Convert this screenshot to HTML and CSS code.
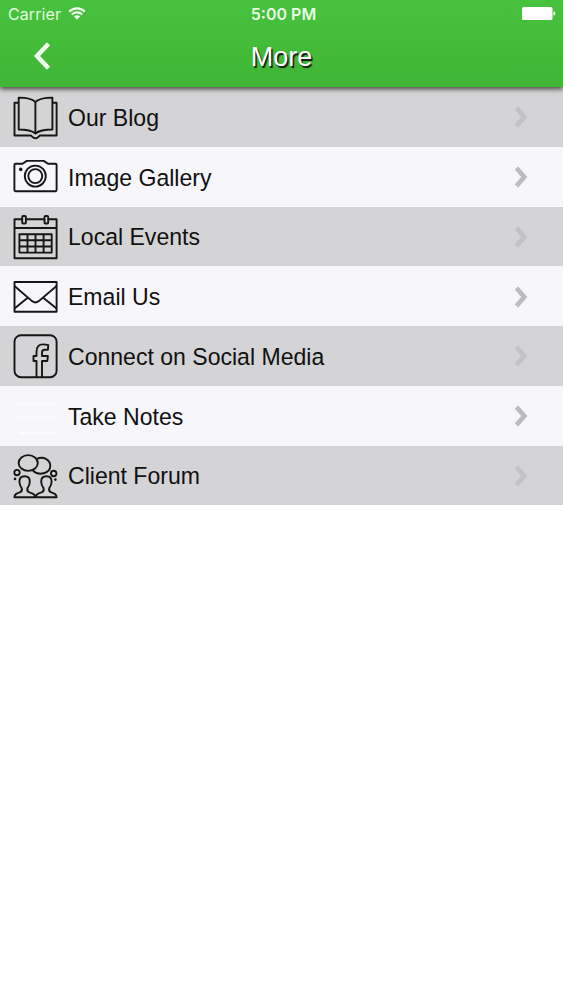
FILE: index.html
```html
<!DOCTYPE html>
<html lang="en">

<head>
    <meta charset="UTF-8">
    <meta name="viewport" content="width=device-width, initial-scale=1.0">
    <title>More</title>

    <link rel="stylesheet" href="styles.css">
</head>

<body>
    <header class="header">
        <div class="status">
            <div class="status__left">
                <span class="status__carrier">Carrier</span>
                <svg class="status__wifi" viewBox="0 0 18 13">
                    <path d="M1.200 4.600a11 11 0 0 1 15.600 0M3.900 7.500a7.200 7.200 0 0 1 10.200 0" />
                    <path class="status__wifi-dot" d="M9 12.600L5.900 9.500a4.400 4.400 0 0 1 6.200 0z" />
                </svg>
            </div>
            <span class="status__time">5:00 PM</span>
            <div class="status__right">
                <svg class="status__battery" viewBox="0 0 34 13">
                    <rect x="0" y="0" width="30.500" height="13" rx="1.500" />
                    <path d="M31.500 4.500q1.800 0 1.800 2t-1.800 2z" />
                </svg>
            </div>
        </div>
        <div class="nav">
            <a class="nav__back" href="#" aria-label="Back">
                <svg viewBox="0 0 18 28">
                    <path d="M15.500 1.800L4 14l11.500 12.200" />
                </svg>
            </a>
            <h1 class="nav__title">More</h1>
            <span></span>
        </div>
    </header>

    <ul class="menu">
        <li class="menu__item">
            <svg class="menu__icon" viewBox="0 0 46 46">
                <path d="M23.400 8C20 4.800 14 3.500 6.700 3.600V35.500C14 35.500 20 36.600 23.400 39.500C27 36.600 33 35.500 40.400 35.500V3.600C33 3.500 27 4.800 23.400 8V39" />
                <path d="M6.500 8.700H2.500V41.500H18.500C20 41.500 20.500 44.300 23.400 44.300S26.800 41.500 28.300 41.500H44.600V8.700H40.500" />
            </svg>
            <span class="menu__text">Our Blog</span>
            <svg class="menu__arrow" viewBox="0 0 16 24"><path d="M3.500 3l7.700 9-7.700 9" /></svg>
        </li>
        <li class="menu__item">
            <svg class="menu__icon" viewBox="0 0 46 46">
                <path d="M3.500 9.800H10.500L14.800 6.900H31.700L36 9.800H43.500Q44.600 9.800 44.600 11V36Q44.600 37.200 43.500 37.200H3.500Q2.400 37.200 2.400 36V11Q2.400 9.800 3.500 9.800z" />
                <circle cx="23.300" cy="22.100" r="10.500" />
                <circle cx="23.300" cy="22.100" r="7" />
                <circle class="fill" cx="8.700" cy="15.400" r="1.800" />
            </svg>
            <span class="menu__text">Image Gallery</span>
            <svg class="menu__arrow" viewBox="0 0 16 24"><path d="M3.500 3l7.700 9-7.700 9" /></svg>
        </li>
        <li class="menu__item">
            <svg class="menu__icon" viewBox="0 0 46 46">
                <path d="M10 5.200H2.500V44.200H44.600V5.200H36.500M14 5.200H32.200M2.500 14H44.600" />
                <rect x="10.200" y="2" width="3.700" height="7.500" rx="1" />
                <rect x="32.500" y="2" width="3.700" height="7.500" rx="1" />
                <path d="M7.400 20.200H39.700V38.600H7.400zM15.500 20.200V38.600M23.500 20.200V38.600M31.600 20.200V38.600M7.400 26.300H39.700M7.400 32.500H39.700" />
            </svg>
            <span class="menu__text">Local Events</span>
            <svg class="menu__arrow" viewBox="0 0 16 24"><path d="M3.500 3l7.700 9-7.700 9" /></svg>
        </li>
        <li class="menu__item">
            <svg class="menu__icon" viewBox="0 0 46 46">
                <path d="M2.500 8H44.600V37.800H2.500z" />
                <path d="M2.500 12L20 27.100Q23.400 29.700 26.800 27.100L44.600 12M2.500 34.500L15.700 23.800M44.600 34.500L31.200 23.800" />
            </svg>
            <span class="menu__text">Email Us</span>
            <svg class="menu__arrow" viewBox="0 0 16 24"><path d="M3.500 3l7.700 9-7.700 9" /></svg>
        </li>
        <li class="menu__item">
            <svg class="menu__icon" viewBox="0 0 46 46">
                <rect x="2.500" y="2.200" width="42.100" height="42" rx="6.500" />
                <path d="M24.500 44V28H21.500V23H24.500V19C24.500 13.500 27 11.400 31 11.400Q34 11.400 36.300 12.200L35.900 16.700H32.800Q30 16.700 30 19.500V23H35.900L35.300 28H30V44" />
            </svg>
            <span class="menu__text">Connect on Social Media</span>
            <svg class="menu__arrow" viewBox="0 0 16 24"><path d="M3.500 3l7.700 9-7.700 9" /></svg>
        </li>
        <li class="menu__item">
            <svg class="menu__icon menu__icon--light" viewBox="0 0 46 46">
                <path d="M7 10.500H44M7 24.500H44M7 40H44" />
            </svg>
            <span class="menu__text">Take Notes</span>
            <svg class="menu__arrow" viewBox="0 0 16 24"><path d="M3.500 3l7.700 9-7.700 9" /></svg>
        </li>
        <li class="menu__item">
            <svg class="menu__icon" viewBox="0 0 46 46">
                <ellipse cx="16.200" cy="10" rx="9.600" ry="7.900" />
                <path d="M24.800 5.900C31 2.800 38.300 6.500 38.300 12.800C38.300 20.500 26.500 23.500 20.800 17.300" />
                <circle cx="5" cy="19.600" r="2.700" />
                <circle cx="41.700" cy="20.500" r="2.700" />
                <circle class="fill" cx="3" cy="25.900" r="1.300" />
                <circle class="fill" cx="43.400" cy="26.600" r="1.300" />
                <path d="M2.400 44.300H44.600C44.600 40.800 42 40.200 38.800 39.200Q36.300 38 37.400 34.800Q39.600 32 39.600 28.500Q39.600 23.300 34.400 23.300T29.200 28.500Q29.200 32 31.400 34.800Q32.500 38 30 39.200C27 40.200 23.500 40.800 23.500 44.300C23.500 40.800 20 40.200 17 39.200Q14.500 38 15.600 34.800Q17.800 32 17.800 28.500Q17.800 23.300 12.600 23.300T7.400 28.500Q7.400 32 9.600 34.800Q10.700 38 8.200 39.200C5 40.200 2.400 40.800 2.400 44.300z" />
            </svg>
            <span class="menu__text">Client Forum</span>
            <svg class="menu__arrow" viewBox="0 0 16 24"><path d="M3.500 3l7.700 9-7.700 9" /></svg>
        </li>
    </ul>
</body>

</html>
```
FILE: styles.css
```css
body {
    margin: 0;
    background-color: #fff;
    font-family: "Liberation Sans", Helvetica, Arial, sans-serif;
    color: #111;
}

svg {
    display: block;
    fill: none;
}

.header {
    position: relative;
    height: 87px;
    background: linear-gradient(#47c23e, #3fb635);
    box-shadow: 0 2px 5px rgba(0, 0, 0, .7);
    color: #fff;
}

.status {
    display: grid;
    grid-template-columns: 1fr auto 1fr;
    align-items: center;
    height: 28px;
    padding: 0 7px 0 8px;
    font-family: Inter, sans-serif;
    font-size: 16px;
}

.status__left {
    display: flex;
    align-items: center;
    gap: 7px;
}

.status__carrier {
    letter-spacing: .1px;
    color: #e2fadf;
}

.status__wifi {
    width: 18px;
    height: 13px;
    margin-top: -1px;
    stroke: #f2fff0;
    stroke-width: 2.2;
}

.status__wifi-dot {
    fill: #f2fff0;
    stroke: none;
}

.status__time {
    padding-left: 3px;
    font-weight: 600;
    color: #e6fce3;
}

.status__right {
    display: flex;
    justify-content: flex-end;
}

.status__battery {
    width: 34px;
    height: 13px;
    margin-top: -1px;
    fill: #fff;
}

.nav {
    display: grid;
    grid-template-columns: 1fr auto 1fr;
    align-items: center;
    height: 56px;
}

.nav__back svg {
    width: 18px;
    height: 28px;
    margin-left: 33px;
    stroke: #f4fff2;
    stroke-width: 4.5;
}

.nav__title {
    margin: 2px 0 0;
    font-size: 27px;
    font-weight: normal;
    text-shadow: 1.5px 1.5px 1px #111;
}

.menu {
    margin: 0;
    padding: 0;
    list-style: none;
}

.menu__item {
    display: flex;
    align-items: center;
    box-sizing: border-box;
    height: 59.75px;
    padding: 1px 34px 0 12px;
    background-color: #f7f6fa;
}

.menu__item:nth-child(odd) {
    background-color: #d4d3d5;
}

.menu__icon {
    width: 46px;
    height: 46px;
    stroke: #161616;
    stroke-width: 1.9;
    stroke-linejoin: round;
}

.menu__icon .fill {
    fill: #161616;
    stroke: none;
}

.menu__icon--light {
    stroke: #fcfcfd;
}

.menu__text {
    flex: 1;
    margin: 2px 0 0 10px;
    font-size: 23.05px;
}

.menu__arrow {
    width: 16px;
    height: 24px;
    stroke: #c2c1c4;
    stroke-width: 4.8;
}

.menu__item:nth-child(even) .menu__arrow {
    stroke: #bcbbbf;
}
```
